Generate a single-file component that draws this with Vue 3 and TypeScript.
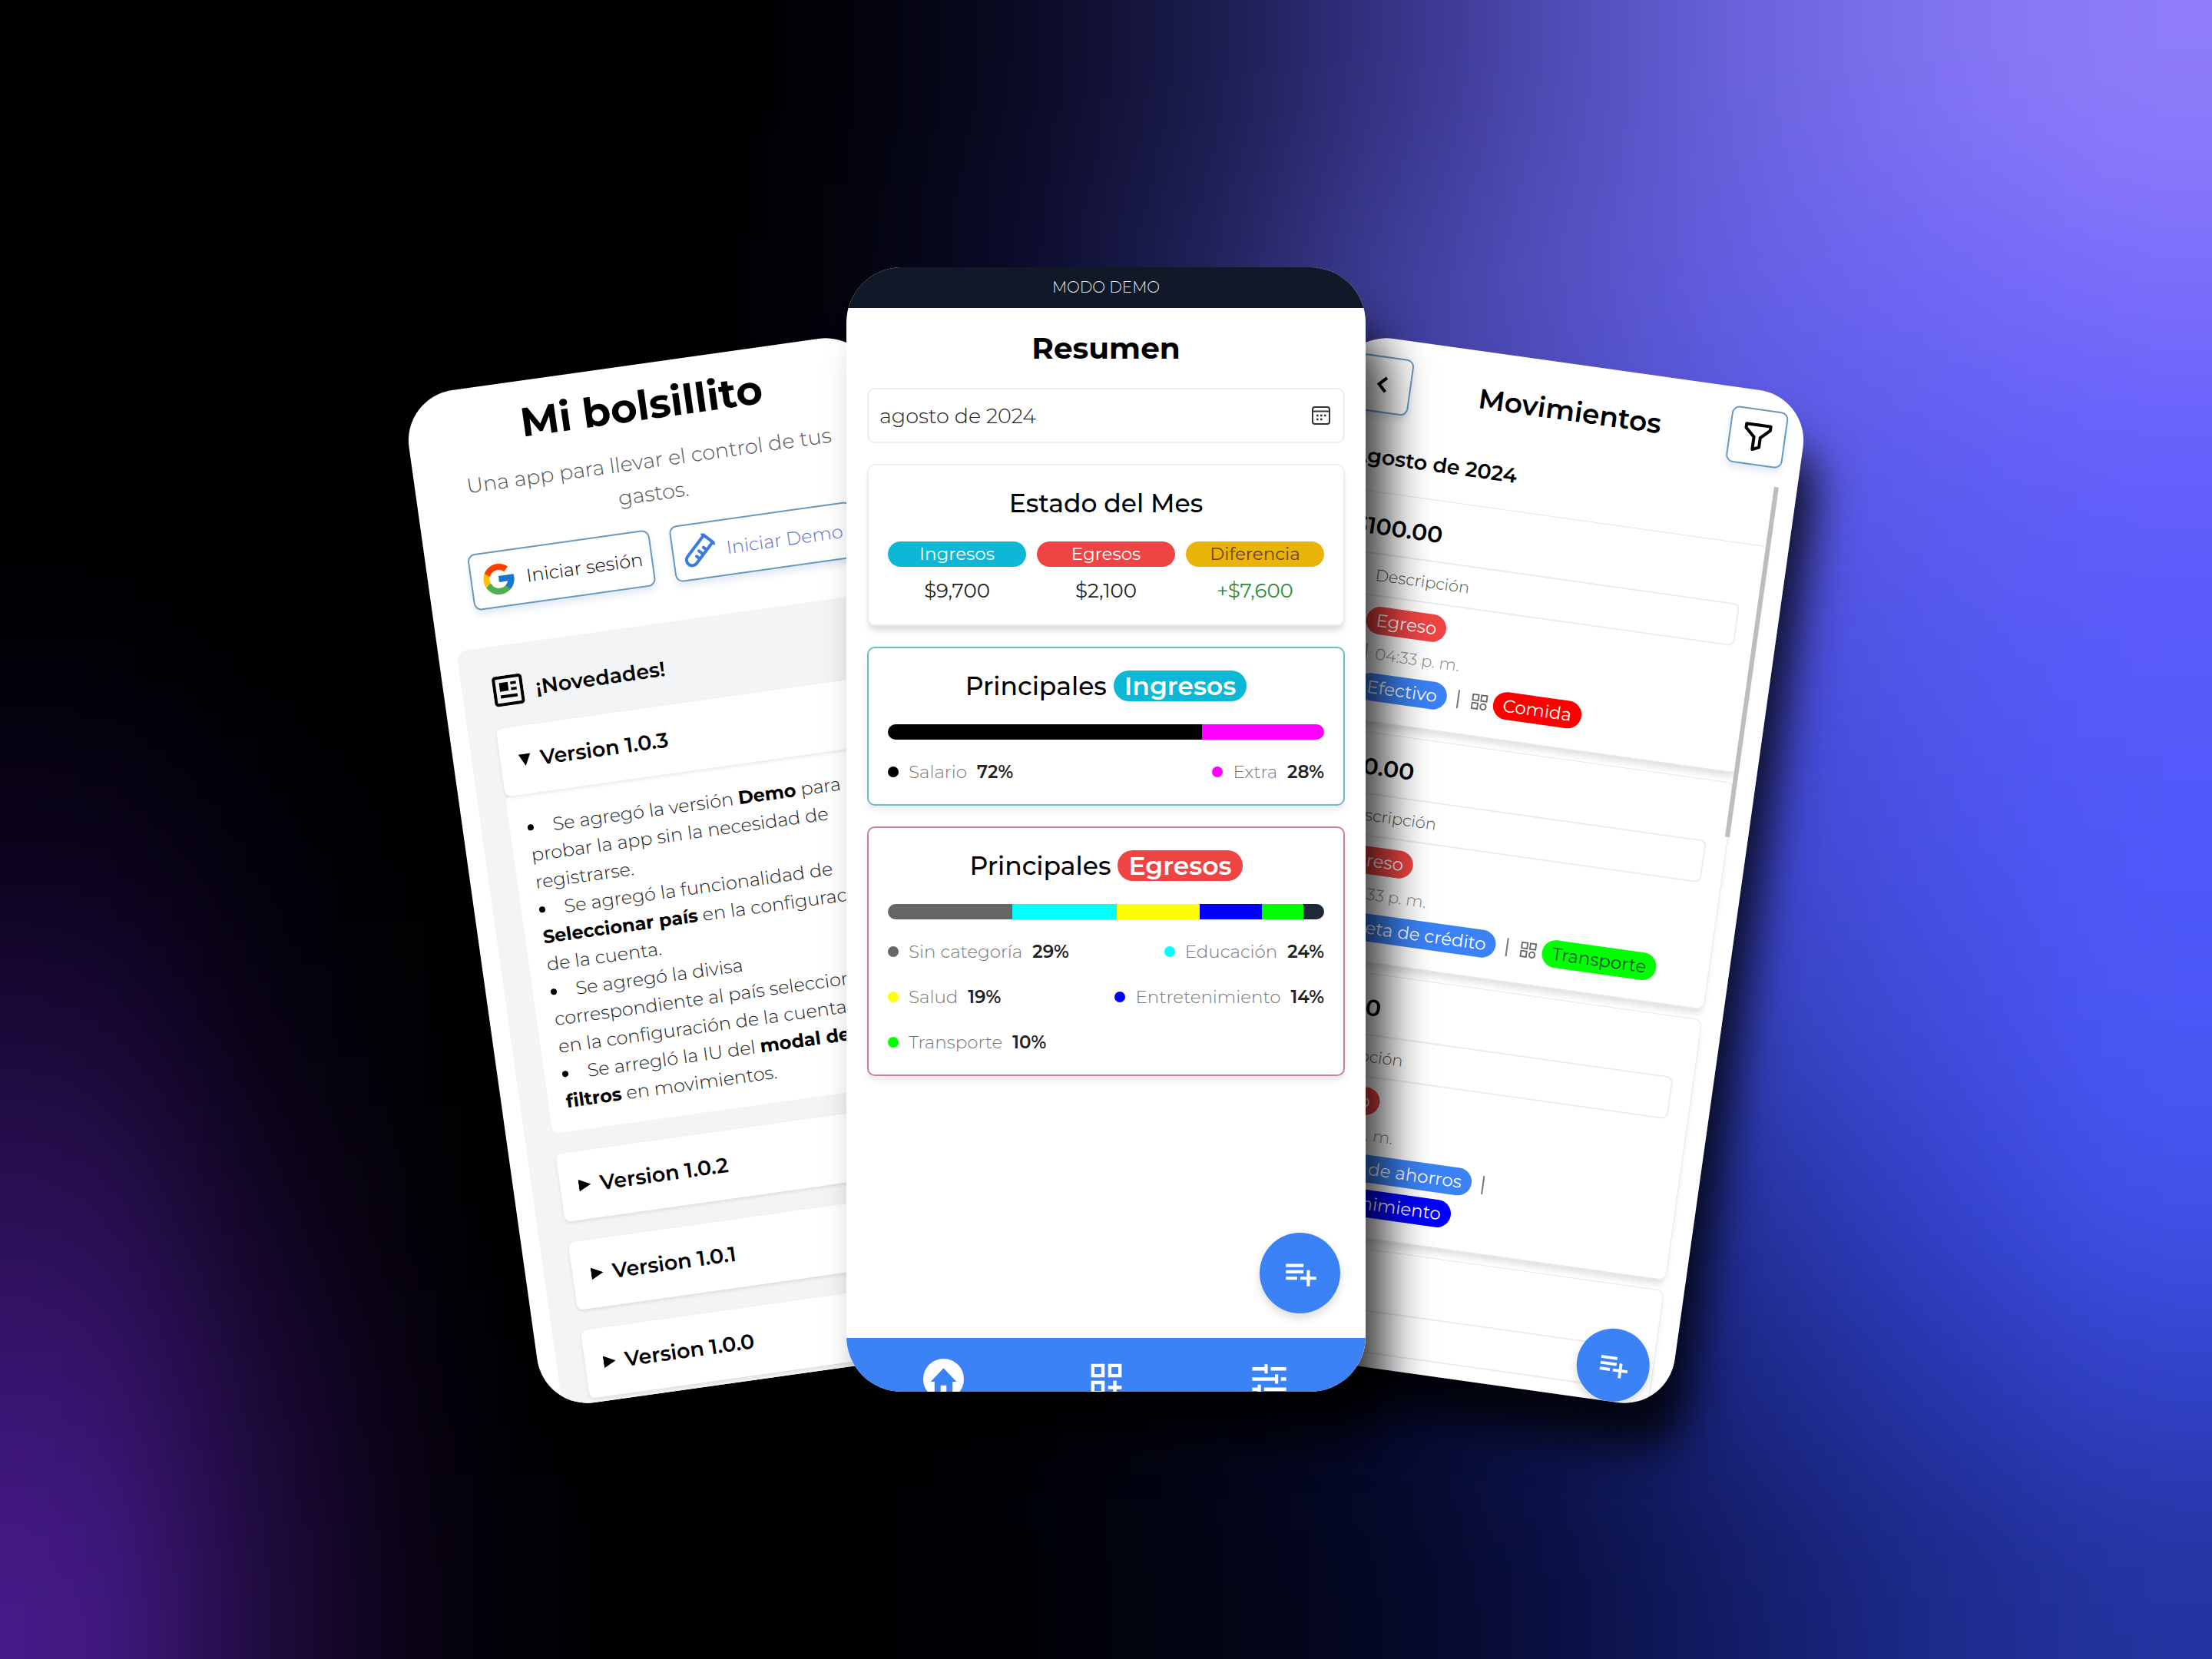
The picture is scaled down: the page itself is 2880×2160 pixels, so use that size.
<script setup lang="ts">
interface Share {
  name: string
  percent: number
  color: string
  weight: number
}

interface Chip {
  label: string
  tone: string
}

interface Movement {
  amount: string
  account?: string
  category?: Chip
  wrapped?: Chip
}

const backdrop: string[][] = [
  ['#000000', '#000000', '#000000', '#000000', '#010106', '#090a22', '#1a1a4a', '#343284', '#514db8', '#6b64de', '#8073f2', '#8e7cfa'],
  ['#000000', '#000000', '#000000', '#000000', '#020209', '#0b0c2c', '#202058', '#3e3e98', '#5552c4', '#6560e6', '#7067f6', '#7b6efa'],
  ['#000000', '#000000', '#000000', '#000000', '#010108', '#070820', '#1c1e50', '#3a3c98', '#4c4cc0', '#5858e2', '#5e5ef0', '#6560fc'],
  ['#020006', '#000000', '#000000', '#000000', '#010106', '#05061a', '#141640', '#2c3080', '#3c40b0', '#474cd4', '#5358ec', '#595afa'],
  ['#0a031a', '#020008', '#000000', '#000000', '#000004', '#030414', '#0c0f34', '#1e246c', '#3038a4', '#3e46cc', '#4a52e8', '#5059fa'],
  ['#190836', '#06020f', '#000000', '#000000', '#000002', '#02030e', '#080b28', '#151b58', '#222b88', '#3542bc', '#414ddc', '#4b57f6'],
  ['#2a1054', '#0e051e', '#000000', '#000000', '#000000', '#01020a', '#05071e', '#0c1140', '#16206c', '#2634a0', '#3342cc', '#4452ea'],
  ['#381470', '#180830', '#020006', '#000000', '#000000', '#010108', '#030518', '#060a30', '#0e1654', '#1c2886', '#2636ac', '#3242c8'],
  ['#441a86', '#1c0a38', '#04010a', '#000000', '#000002', '#000106', '#020412', '#050824', '#0a1044', '#141e6a', '#1c2a8a', '#2434a0'],
]

// The outer cells are repeated so the blur never fades to nothing at an edge.
const rows = [backdrop[0], ...backdrop, backdrop[backdrop.length - 1]]
const cells = rows.flatMap((row) => [row[0], ...row, row[row.length - 1]])

const income: Share[] = [
  { name: 'Salario', percent: 72, color: '#000000', weight: 72 },
  { name: 'Extra', percent: 28, color: '#ff00ff', weight: 28 },
]

const expenses: Share[] = [
  { name: 'Sin categoría', percent: 29, color: '#666666', weight: 600 },
  { name: 'Educación', percent: 24, color: '#00ffff', weight: 500 },
  { name: 'Salud', percent: 19, color: '#ffff00', weight: 400 },
  { name: 'Entretenimiento', percent: 14, color: '#0000ff', weight: 300 },
  { name: 'Transporte', percent: 10, color: '#00ff00', weight: 200 },
]

const expenseBar = [...expenses, { name: 'Otros', percent: 5, color: '#1f2937', weight: 100 }]

const groups = [
  { label: 'Ingresos', tone: 'cyan', shares: income, bar: income },
  { label: 'Egresos', tone: 'red', shares: expenses, bar: expenseBar },
]

const movements: Movement[] = [
  { amount: '$100.00', account: 'Efectivo', category: { label: 'Comida', tone: 'food' } },
  { amount: '$200.00', account: 'Tarjeta de crédito', category: { label: 'Transporte', tone: 'transport' } },
  { amount: '$300.00', account: 'Cuenta de ahorros', wrapped: { label: 'Entretenimiento', tone: 'fun' } },
  { amount: '$400.00' },
]

const olderVersions = ['1.0.2', '1.0.1', '1.0.0']
</script>

<template>
  <main class="scene">
    <div class="backdrop" aria-hidden="true">
      <span v-for="(color, i) in cells" :key="i" :style="{ background: color }"></span>
    </div>

    <section class="phone side left">
      <div class="screen welcome">
        <h1>Mi bolsillito</h1>
        <p class="tagline">Una app para llevar el control de tus<br />gastos.</p>
        <div class="actions">
          <button type="button" class="outlined">
            <svg class="google" viewBox="0 0 48 48" aria-hidden="true">
              <path fill="#FFC107" d="M43.611 20.083H42V20H24v8h11.303c-1.649 4.657-6.08 8-11.303 8-6.627 0-12-5.373-12-12s5.373-12 12-12c3.059 0 5.842 1.154 7.961 3.039l5.657-5.657C34.046 6.053 29.268 4 24 4 12.955 4 4 12.955 4 24s8.955 20 20 20 20-8.955 20-20c0-1.341-.138-2.65-.389-3.917z" />
              <path fill="#FF3D00" d="m6.306 14.691 6.571 4.819C14.655 15.108 18.961 12 24 12c3.059 0 5.842 1.154 7.961 3.039l5.657-5.657C34.046 6.053 29.268 4 24 4 16.318 4 9.656 8.337 6.306 14.691z" />
              <path fill="#4CAF50" d="M24 44c5.166 0 9.86-1.977 13.409-5.192l-6.19-5.238A11.91 11.91 0 0 1 24 36c-5.202 0-9.619-3.317-11.283-7.946l-6.522 5.025C9.505 39.556 16.227 44 24 44z" />
              <path fill="#1976D2" d="M43.611 20.083H42V20H24v8h11.303a12.04 12.04 0 0 1-4.087 5.571l6.19 5.238C36.971 39.205 44 34 44 24c0-1.341-.138-2.65-.389-3.917z" />
            </svg>
            Iniciar sesión
          </button>
          <button type="button" class="outlined demo">
            <svg class="tube" viewBox="0 0 24 24" fill="none" stroke="currentColor" stroke-width="2.2" stroke-linecap="round" stroke-linejoin="round" aria-hidden="true">
              <g transform="rotate(45 12 12)">
                <path d="M6.500 1h11M8 1v19a4 4 0 0 0 8 0V1M16 8h-3M16 12h-4M16 16h-3" />
              </g>
            </svg>
            Iniciar Demo
          </button>
        </div>

        <div class="news">
          <h2>
            <svg viewBox="0 0 24 24" aria-hidden="true">
              <rect x="1.4" y="1.4" width="21.2" height="21.2" rx="1.6" fill="none" stroke="currentColor" stroke-width="2.4" />
              <path fill="currentColor" d="M5.5 5.500h6.800v6.800H5.500zM14.300 5.500h4.400v2.200h-4.400zM14.300 10.100h4.400v2.200h-4.400zM5.500 15.300h13.200v2.400H5.500z" />
            </svg>
            ¡Novedades!
          </h2>
          <details open>
            <summary>Version 1.0.3</summary>
            <ul>
              <li>Se agregó la versión <b>Demo</b> para<br />probar la app sin la necesidad de<br />registrarse.</li>
              <li>Se agregó la funcionalidad de<br /><b>Seleccionar país</b> en la configuración<br />de la cuenta.</li>
              <li>Se agregó la divisa<br />correspondiente al país seleccionado<br />en la configuración de la cuenta.</li>
              <li>Se arregló la IU del <b>modal de</b><br /><b>filtros</b> en movimientos.</li>
            </ul>
          </details>
          <details v-for="version in olderVersions" :key="version">
            <summary>Version {{ version }}</summary>
          </details>
        </div>
      </div>
    </section>

    <section class="phone side right">
      <div class="screen history">
        <header>
          <button type="button" class="outlined square" aria-label="Volver">
            <svg class="icon" viewBox="0 0 24 24" fill="none" stroke="currentColor" stroke-width="2.4" aria-hidden="true"><path d="M14.500 6.500 9 12l5.500 5.500" /></svg>
          </button>
          <h1>Movimientos</h1>
          <button type="button" class="outlined square" aria-label="Filtrar">
            <svg class="icon" viewBox="0 0 24 24" fill="none" stroke="currentColor" stroke-width="2.4" stroke-linejoin="round" aria-hidden="true"><path d="M2.500 2.500h19v3.200l-7 6.500v7.600l-5 2.200v-9.800l-7-6.500z" /></svg>
          </button>
        </header>
        <div class="list">
          <h2>Agosto de 2024</h2>
          <article v-for="item in movements" :key="item.amount">
            <strong>{{ item.amount }}</strong>
            <input type="text" value="Descripción" aria-label="Descripción" readonly />
            <template v-if="item.account">
              <div class="chips"><span class="chip expense">Egreso</span></div>
              <time><i></i>04:33 p. m.</time>
              <div class="chips">
                <span class="chip account">{{ item.account }}</span>
                <i class="bar-mark"></i>
                <template v-if="item.category">
                  <svg viewBox="0 0 24 24" fill="none" stroke="currentColor" stroke-width="2" aria-hidden="true"><path d="M2 2h8v8H2zM14 2h8v8h-8zM2 14h8v8H2z" /><circle cx="18" cy="18" r="4" /></svg>
                  <span class="chip" :class="item.category.tone">{{ item.category.label }}</span>
                </template>
              </div>
            </template>
            <div v-if="item.wrapped" class="chips second">
              <span class="chip" :class="item.wrapped.tone">{{ item.wrapped.label }}</span>
            </div>
          </article>
        </div>
        <span class="scrollbar"></span>
        <button type="button" class="fab" aria-label="Agregar movimiento">
          <svg viewBox="0 0 24 24" fill="currentColor" aria-hidden="true"><path d="M3 16h7v-2H3m15 0v-4h-2v4h-4v2h4v4h2v-4h4v-2M14 6H3v2h11m0 2H3v2h11z" /></svg>
        </button>
      </div>
    </section>

    <section class="phone center">
      <div class="screen summary">
        <p class="banner">MODO DEMO</p>
        <div class="body">
          <h1>Resumen</h1>
          <label class="month">
            <input type="text" value="agosto de 2024" aria-label="Mes" />
            <svg viewBox="0 0 24 24" fill="none" stroke="currentColor" stroke-width="2" aria-hidden="true">
              <rect x="1" y="1" width="22" height="22" rx="3" /><path d="M1 6.500h22" />
              <path d="M6 12h2.600M11 12h2.600M16 12h2.600M6 17h2.600M11 17h2.600" stroke-width="2.600" />
            </svg>
          </label>

          <article class="card status">
            <h2>Estado del Mes</h2>
            <dl>
              <div><dt class="cyan">Ingresos</dt><dd>$9,700</dd></div>
              <div><dt class="red">Egresos</dt><dd>$2,100</dd></div>
              <div><dt class="amber">Diferencia</dt><dd class="gain">+$7,600</dd></div>
            </dl>
          </article>

          <article v-for="group in groups" :key="group.label" class="card" :class="'edge-' + group.tone">
            <h2>Principales <span :class="group.tone">{{ group.label }}</span></h2>
            <div class="meter">
              <span v-for="part in group.bar" :key="part.name" :style="{ flexGrow: part.weight, background: part.color }"></span>
            </div>
            <ul class="legend">
              <li v-for="share in group.shares" :key="share.name">
                <i :style="{ background: share.color }"></i>{{ share.name }}<b>{{ share.percent }}%</b>
              </li>
            </ul>
          </article>
        </div>

        <button type="button" class="fab" aria-label="Agregar movimiento">
          <svg viewBox="0 0 24 24" fill="currentColor" aria-hidden="true"><path d="M3 16h7v-2H3m15 0v-4h-2v4h-4v2h4v4h2v-4h4v-2M14 6H3v2h11m0 2H3v2h11z" /></svg>
        </button>
        <nav>
          <a href="#resumen" aria-label="Resumen">
            <svg viewBox="0 0 24 24" aria-hidden="true"><circle cx="12" cy="12" r="12" fill="#fff" /><path fill="#3b82f6" d="M12 5.600 4.400 13.600h2.300V20h3.600v-4.300h3.400V20h3.600v-6.400h2.300z" /></svg>
          </a>
          <a href="#categorias" aria-label="Categorías">
            <svg viewBox="0 0 24 24" fill="#fff" aria-hidden="true"><path d="M3 11h8V3H3v8zm2-6h4v4H5V5zM13 3v8h8V3h-8zm6 6h-4V5h4v4zM3 21h8v-8H3v8zm2-6h4v4H5v-4zM18 13h-2v3h-3v2h3v3h2v-3h3v-2h-3z" /></svg>
          </a>
          <a href="#ajustes" aria-label="Ajustes">
            <svg viewBox="0 0 24 24" fill="#fff" aria-hidden="true"><path d="M2 5h7.200V3.300h1.900v5.400H9.200V7H2zM12.900 5H22v2h-9.100zM2 11h13.400V9.300h1.900v5.400h-1.900V13H2zM18.900 11H22v2h-3.100zM2 17h3.200v-1.700h1.900v5.400H5.200V19H2zM9 17h13v2H9z" /></svg>
          </a>
        </nav>
      </div>
    </section>
  </main>
</template>

<style>
body {
  margin: 0;
  background: #000;
}
</style>

<style scoped>
* {
  box-sizing: border-box;
}

h1,
h2,
p,
ul,
dl,
dd {
  margin: 0;
  padding: 0;
}

button,
input {
  font: inherit;
  color: inherit;
}

.scene {
  position: relative;
  display: grid;
  place-items: center;
  min-height: 100vh;
  overflow: hidden;
  font-family: Montserrat, Inter, 'Open Sans', sans-serif;
  color: #000;
}

.backdrop {
  position: absolute;
  inset: -11.111vh -8.333vw;
  display: grid;
  grid-template-columns: repeat(14, 1fr);
  grid-template-rows: repeat(11, 1fr);
  filter: blur(100px);
}

/* Phones */
.phone {
  position: relative;
  grid-area: 1 / 1;
  border-radius: 72px;
}

.screen {
  position: relative;
  display: flex;
  flex-direction: column;
  height: 100%;
  overflow: hidden;
  border-radius: inherit;
  background: #fff;
}

.center {
  width: 676px;
  height: 1464px;
  box-shadow: 32px 70px 60px -6px rgba(0, 0, 0, 0.8);
}

.side {
  width: 614px;
  height: 1331px;
  border-radius: 66px;
  box-shadow: 30px 60px 60px -6px rgba(0, 0, 0, 0.85);
}

.left {
  transform: translate(-520px, 53px) rotate(-8deg);
}

.right {
  transform: translate(520px, 53px) rotate(8deg);
}

.outlined {
  display: flex;
  align-items: center;
  height: 74px;
  padding: 0;
  border: 2px solid #6899c0;
  border-radius: 10px;
  background: #fff;
  box-shadow: 0 6px 8px rgba(59, 100, 180, 0.14);
}

.fab {
  position: absolute;
  display: grid;
  place-items: center;
  padding: 0;
  border: 0;
  border-radius: 50%;
  background: #3b82f6;
  color: #fff;
  box-shadow: 0 6px 12px rgba(0, 0, 0, 0.14);
}

/* Welcome */
.welcome {
  padding: 24px 24px 0;
}

.welcome h1 {
  font-size: 53px;
  line-height: 60px;
  text-align: center;
}

.tagline {
  margin-top: 21px;
  font-size: 27px;
  font-weight: 300;
  line-height: 43px;
  text-align: center;
  color: #555;
}

.actions {
  display: grid;
  grid-template-columns: 1fr 1fr;
  gap: 26px;
  padding: 24px 31px 0;
}

.actions .outlined {
  gap: 12px;
  padding-left: 11px;
  font-size: 24px;
  font-weight: 300;
  white-space: nowrap;
}

.actions .demo {
  gap: 14px;
  color: #5f70cc;
}

.google {
  width: 48px;
  height: 48px;
}

.tube {
  width: 44px;
  height: 44px;
  color: #3b7be0;
}

.news {
  flex: none;
  height: 1040px;
  margin-top: 49px;
  padding: 39px 37px 0;
  border-radius: 14px;
  background: #f3f4f6;
}

.news h2 {
  display: flex;
  align-items: center;
  gap: 16px;
  height: 40px;
  margin-bottom: 28px;
  padding-left: 3px;
  font-size: 27px;
  font-weight: 600;
}

.news h2 svg {
  width: 40px;
  height: 40px;
}

details {
  margin-bottom: 27px;
}

summary {
  display: flex;
  align-items: center;
  gap: 12px;
  height: 89px;
  padding-left: 24px;
  border-radius: 8px;
  background: #fff;
  box-shadow: 0 2px 5px rgba(0, 0, 0, 0.1);
  font-size: 27px;
  font-weight: 600;
}

summary::before {
  content: '';
  width: 16px;
  height: 16px;
  background: #000;
  clip-path: polygon(0 0, 100% 50%, 0 100%);
}

details[open] summary {
  position: relative;
}

details[open] summary::before {
  clip-path: polygon(0 0, 100% 0, 50% 100%);
}

details ul {
  padding: 26px 23px 21px;
  border-radius: 8px;
  background: #fff;
  list-style: none;
  font-size: 24px;
  font-weight: 300;
  line-height: 36px;
  white-space: nowrap;
  color: #222;
}

details li::before {
  content: '';
  display: inline-block;
  width: 8px;
  height: 8px;
  margin: 0 25px 4px 0;
  border-radius: 50%;
  background: #000;
}

details b {
  font-weight: 700;
  color: #000;
}

/* Movements */
.history header {
  display: flex;
  align-items: center;
  justify-content: space-between;
  padding: 24px 24px 0;
}

.history h1 {
  font-size: 36px;
  font-weight: 600;
  line-height: 44px;
}

.square {
  justify-content: center;
  width: 74px;
}

.icon {
  width: 40px;
  height: 40px;
}

.list {
  display: flex;
  flex: none;
  flex-direction: column;
  gap: 13px;
  padding: 24px 26px 0;
}

.list h2 {
  padding-left: 8px;
  font-size: 27px;
  font-weight: 600;
  line-height: 65px;
}

.list article {
  min-height: 296px;
  padding: 23px 26px 26px 21px;
  border: 1px solid #e5e7eb;
  border-radius: 10px;
  box-shadow: 0 8px 8px -2px rgba(0, 0, 0, 0.12);
}

.list strong {
  display: block;
  font-size: 30px;
  font-weight: 600;
  line-height: 42px;
}

.list input {
  display: block;
  width: 100%;
  height: 56px;
  margin: 13px 0;
  padding: 0 36px;
  border: 2px solid #ececee;
  border-radius: 8px;
  background: #fff;
  font-size: 21px;
  font-weight: 300;
  color: #555;
}

.list time {
  display: flex;
  align-items: center;
  gap: 11px;
  height: 36px;
  margin: 7px 0 8px;
  padding-left: 39px;
  font-size: 21px;
  font-weight: 300;
  color: #888;
}

.list time i,
.bar-mark {
  width: 2px;
  height: 24px;
  background: #aaa;
}

.chips {
  display: flex;
  align-items: center;
  height: 36px;
  padding-left: 34px;
}

.chips.second {
  margin-top: 9px;
}

.chips svg {
  width: 22px;
  height: 22px;
  margin-right: 7px;
  color: #666;
}

.chip {
  padding: 0 13px;
  border-radius: 18px;
  font-size: 23px;
  font-weight: 400;
  line-height: 36px;
  white-space: nowrap;
  color: #fff;
}

.bar-mark {
  margin: 0 16px 0 14px;
  background: #777;
}

.expense {
  background: #ef4444;
}

.account {
  background: #3b82f6;
}

.food {
  background: #f00;
}

.transport {
  background: #0f0;
  color: #14532d;
}

.fun {
  background: #00f;
}

.scrollbar {
  position: absolute;
  top: 122px;
  right: 24px;
  width: 6px;
  height: 460px;
  background: #bdbdbd;
}

.history .fab {
  right: 31px;
  bottom: 0;
  width: 95px;
  height: 95px;
}

.history .fab svg {
  width: 46px;
  height: 46px;
}

/* Summary */
.banner {
  flex: none;
  background: #111827;
  font-size: 20px;
  font-weight: 300;
  line-height: 53px;
  text-align: center;
  color: #e5e7eb;
}

.body {
  display: flex;
  flex: 1;
  flex-direction: column;
  gap: 27px;
  padding: 0 27px;
}

.body h1 {
  margin-bottom: -27px;
  font-size: 39px;
  font-weight: 700;
  line-height: 104px;
  text-align: center;
}

.month {
  display: flex;
  align-items: center;
  height: 72px;
  padding: 0 17px 0 14px;
  border: 2px solid #ededf0;
  border-radius: 10px;
}

.month input {
  flex: 1;
  min-width: 0;
  padding: 0;
  border: 0;
  background: none;
  font-size: 27px;
  font-weight: 300;
  color: #222;
}

.month svg {
  width: 24px;
  height: 24px;
  color: #333;
}

.card {
  display: flex;
  flex-direction: column;
  gap: 26px;
  padding: 26px 25px;
  border: 2px solid #ededf0;
  border-radius: 10px;
  background: #fff;
  box-shadow: 0 6px 8px rgba(0, 0, 0, 0.08);
}

.status {
  box-shadow: 0 8px 8px -2px rgba(0, 0, 0, 0.14);
}

.edge-cyan {
  border-color: #6bbcc8;
}

.edge-red {
  border-color: #cf7f88;
}

.card h2 {
  font-size: 33px;
  font-weight: 500;
  line-height: 47px;
  text-align: center;
}

.card h2 span {
  display: inline-block;
  padding: 0 14px;
  border-radius: 20px;
  font-weight: 600;
  line-height: 40px;
}

.status dl {
  display: grid;
  grid-template-columns: repeat(3, 1fr);
  gap: 14px;
  text-align: center;
}

.status dt {
  border-radius: 17px;
  font-size: 23px;
  font-weight: 400;
  line-height: 33px;
}

.status dd {
  margin-top: 13px;
  font-size: 26px;
  font-weight: 400;
  line-height: 36px;
  color: #222;
}

.cyan {
  background: #0cb8d6;
  color: #fff;
}

.red {
  background: #ef4444;
  color: #fff;
}

.amber {
  background: #eab308;
  color: #713f12;
}

.status .gain {
  color: #2e8b3a;
}

.meter {
  display: flex;
  height: 20px;
  overflow: hidden;
  border-radius: 10px;
}

.meter span {
  flex-basis: 0;
}

.legend {
  display: grid;
  grid-template-columns: 1fr auto;
  row-gap: 27px;
  list-style: none;
  font-size: 23px;
  font-weight: 300;
  line-height: 32px;
  color: #777;
}

.legend li {
  display: flex;
  align-items: center;
  gap: 13px;
}

.legend li:nth-child(even) {
  justify-self: end;
}

.legend i {
  width: 14px;
  height: 14px;
  border-radius: 50%;
}

.legend b {
  font-weight: 600;
  color: #222;
}

.summary .fab {
  right: 33px;
  bottom: 102px;
  width: 105px;
  height: 105px;
}

.summary .fab svg {
  width: 50px;
  height: 50px;
}

nav {
  display: grid;
  flex: none;
  grid-template-columns: repeat(3, 1fr);
  height: 106px;
  margin-bottom: -36px;
  padding: 0 20px;
  background: #3b82f6;
}

nav a {
  display: grid;
  place-items: center;
}

nav svg {
  width: 53px;
  height: 53px;
}
</style>
